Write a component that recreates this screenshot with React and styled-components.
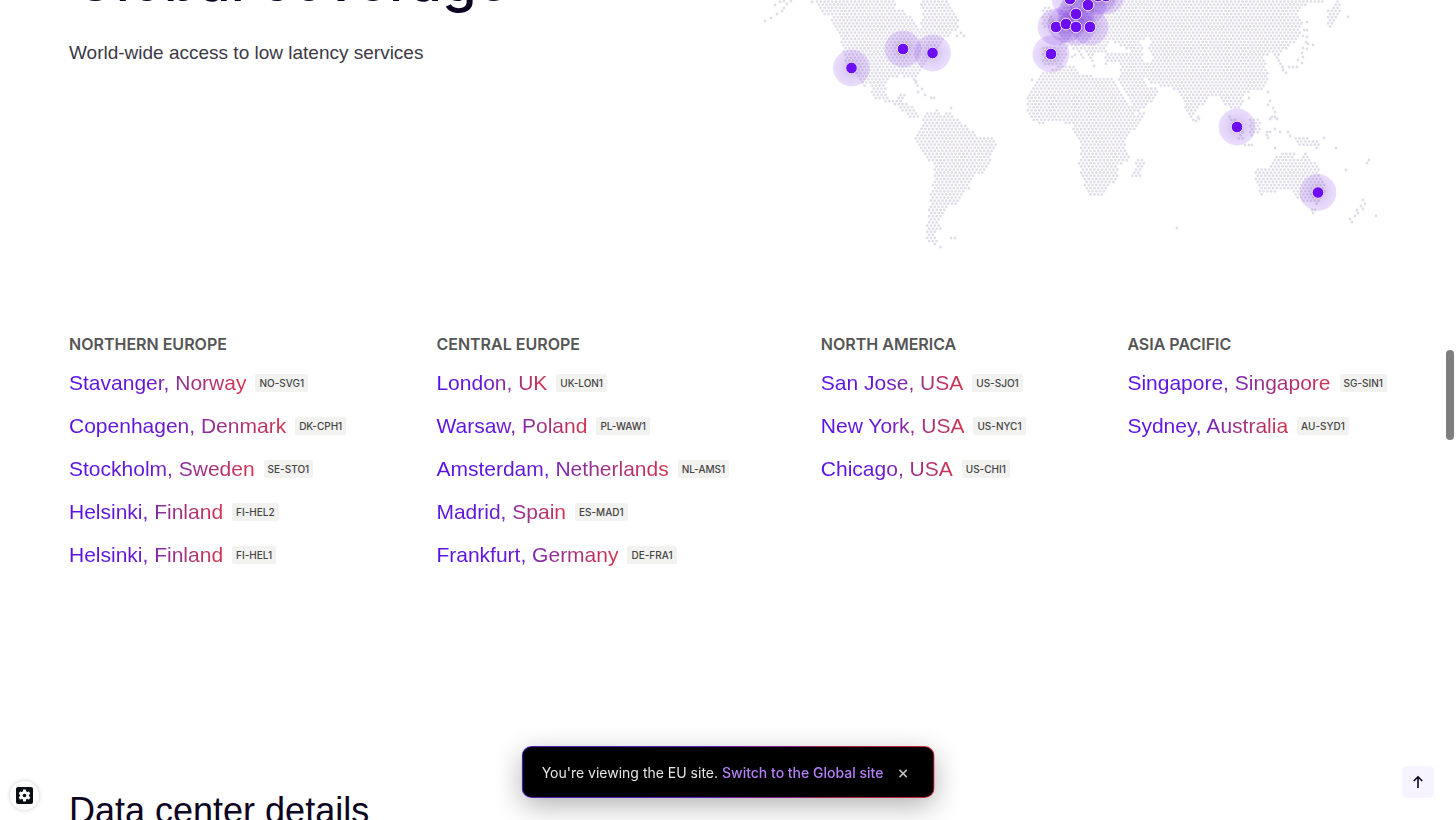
import React from 'react';
import styled, { createGlobalStyle } from 'styled-components';

const sans = `'Liberation Sans', Arial, sans-serif`;
const inter = `Inter, 'Liberation Sans', sans-serif`;

const GlobalStyle = createGlobalStyle`
  * {
    box-sizing: border-box;
  }

  body {
    margin: 0;
    background: #fff;
    color: #0c0420;
    font-family: ${inter};
  }
`;

const regions = [
  {
    name: 'Northern Europe',
    places: [
      ['Stavanger, Norway', 'NO-SVG1'],
      ['Copenhagen, Denmark', 'DK-CPH1'],
      ['Stockholm, Sweden', 'SE-STO1'],
      ['Helsinki, Finland', 'FI-HEL2'],
      ['Helsinki, Finland', 'FI-HEL1'],
    ],
  },
  {
    name: 'Central Europe',
    places: [
      ['London, UK', 'UK-LON1'],
      ['Warsaw, Poland', 'PL-WAW1'],
      ['Amsterdam, Netherlands', 'NL-AMS1'],
      ['Madrid, Spain', 'ES-MAD1'],
      ['Frankfurt, Germany', 'DE-FRA1'],
    ],
  },
  {
    name: 'North America',
    places: [
      ['San Jose, USA', 'US-SJO1'],
      ['New York, USA', 'US-NYC1'],
      ['Chicago, USA', 'US-CHI1'],
    ],
  },
  {
    name: 'Asia Pacific',
    places: [
      ['Singapore, Singapore', 'SG-SIN1'],
      ['Sydney, Australia', 'AU-SYD1'],
    ],
  },
];

// outlines of the land masses, filled with dots below
const land = [
  // north and central america
  [[812, -4], [823, 14], [830, 15], [835, 28], [840, 38], [842, 48], [843, 56], [848, 66], [857, 76], [864, 90], [868, 84], [875, 98], [887, 103], [897, 106], [907, 115], [914, 119], [922, 119], [912, 107], [903, 102], [906, 94], [898, 94], [894, 101], [888, 96], [885, 87], [888, 79], [900, 76], [911, 77], [917, 88], [919, 86], [915, 77], [921, 72], [926, 64], [933, 56], [942, 43], [949, 36], [960, 28], [959, 19], [952, 9], [944, -4], [919, -4], [923, 10], [920, 28], [916, 27], [913, 17], [903, 11], [896, 10], [895, -4]],
  // south america
  [[921, 118], [930, 111], [938, 110], [944, 115], [950, 111], [960, 121], [967, 126], [973, 132], [980, 137], [992, 137], [997, 144], [991, 157], [989, 164], [982, 174], [975, 174], [972, 183], [968, 190], [962, 196], [958, 204], [949, 206], [943, 216], [938, 223], [941, 228], [936, 235], [937, 242], [941, 248], [931, 244], [926, 240], [925, 232], [928, 220], [929, 207], [932, 187], [934, 170], [932, 163], [925, 158], [920, 150], [915, 142], [917, 133], [922, 126]],
  // africa
  [[1042, 71], [1037, 78], [1030, 89], [1027, 100], [1027, 112], [1035, 122], [1043, 124], [1052, 121], [1073, 124], [1073, 134], [1080, 143], [1081, 154], [1076, 163], [1082, 175], [1085, 187], [1091, 196], [1102, 196], [1107, 189], [1113, 183], [1119, 174], [1118, 167], [1129, 161], [1129, 154], [1126, 147], [1127, 137], [1137, 128], [1148, 112], [1133, 114], [1128, 104], [1120, 90], [1113, 76], [1098, 78], [1087, 75], [1077, 72], [1075, 64], [1062, 64], [1052, 70]],
  [[1143, 155], [1145, 163], [1140, 177], [1132, 176], [1136, 160]],
  // iberia, britain
  [[1042, 48], [1068, 46], [1066, 57], [1062, 64], [1050, 67], [1042, 63]],
  [[1041, 8], [1050, 6], [1056, 29], [1043, 28]],
  // eurasia
  [[1062, -4], [1058, 30], [1060, 48], [1071, 48], [1077, 51], [1083, 63], [1085, 57], [1081, 50], [1086, 51], [1092, 63], [1095, 54], [1104, 53], [1104, 64], [1119, 63], [1121, 74], [1117, 79], [1126, 96], [1135, 112], [1144, 108], [1157, 98], [1159, 89], [1148, 87], [1143, 78], [1149, 79], [1153, 85], [1170, 87], [1180, 93], [1185, 107], [1193, 121], [1198, 110], [1208, 98], [1219, 94], [1227, 107], [1235, 111], [1244, 104], [1242, 97], [1250, 92], [1263, 89], [1269, 80], [1268, 72], [1264, 58], [1272, 53], [1278, 61], [1280, 69], [1283, 67], [1278, 55], [1290, 47], [1300, 36], [1303, 23], [1298, 12], [1308, 3], [1326, 3], [1326, -4]],
  // kamchatka
  [[1338, -4], [1342, 12], [1332, 29], [1328, 26], [1328, 10], [1334, 5]],
  // borneo, new guinea, sumatra
  [[1248, 118], [1261, 118], [1260, 133], [1250, 137]],
  [[1295, 136], [1306, 138], [1318, 141], [1320, 149], [1305, 146], [1297, 145]],
  [[1226, 110], [1241, 125], [1244, 138], [1239, 140]],
  // australia
  [[1284, 152], [1295, 152], [1295, 158], [1302, 160], [1305, 150], [1309, 156], [1315, 163], [1320, 172], [1326, 183], [1325, 195], [1318, 204], [1307, 203], [1297, 198], [1291, 190], [1276, 191], [1259, 196], [1258, 186], [1254, 175], [1258, 168], [1267, 167], [1272, 159]],
];

// black sea, caspian sea
const seas = [
  [[1106, 49], [1111, 41], [1116, 43], [1129, 50], [1128, 54], [1107, 52]],
  [[1139, 43], [1147, 38], [1150, 42], [1146, 49], [1152, 56], [1150, 62], [1144, 62], [1143, 50]],
];

const islands = [
  [765, 21], [771, 18], [777, 14], [782, 11], [784, 8], [787, 4], [775, 5], [780, 2], [784, 1], [791, 1], [812, 2],
  [916, 81], [918, 92], [922, 89], [925, 95], [931, 98], [934, 98], [957, 36], [961, 33], [964, 36], [951, 108],
  [1094, 66], [1072, 57], [1075, 55], [1032, 80],
  [1304, 30], [1307, 22], [1307, 30], [1303, 36], [1307, 37], [1306, 42], [1308, 44], [1313, 45], [1303, 48],
  [1307, 49], [1302, 53], [1303, 57], [1298, 60], [1302, 63], [1297, 67], [1293, 67], [1289, 67], [1283, 70],
  [1286, 73], [1348, 17], [1268, 92], [1249, 98], [1270, 101], [1268, 105], [1273, 108], [1275, 112], [1272, 117],
  [1275, 117], [1270, 119], [1277, 119], [1198, 117], [1196, 121], [1199, 119], [1245, 145], [1249, 145],
  [1252, 145], [1267, 132], [1270, 132], [1267, 135], [1268, 138], [1275, 129], [1280, 132], [1288, 132], [1290, 136],
  [1324, 138], [1336, 148], [1346, 170], [1369, 160], [1367, 163], [1275, 148], [1376, 216], [1363, 200], [1365, 204],
  [1361, 206], [1363, 209], [1357, 210], [1358, 213], [1355, 216], [1350, 219], [1352, 222], [1312, 210], [1315, 210],
  [1313, 213], [1177, 228], [951, 238], [955, 238],
];

const markers = [
  [851.5, 68], [903, 49], [932.5, 53], [1051, 54], [1056, 27], [1066, 24], [1090, 27], [1076, 27],
  [1076, 14], [1070, -1], [1098, -4], [1106, -4], [1088, 5], [1237, 127], [1318, 192.5],
];

const inside = (x, y, shape) => {
  let hit = false;
  for (let i = 0, j = shape.length - 1; i < shape.length; j = i++) {
    const [xi, yi] = shape[i];
    const [xj, yj] = shape[j];
    if (yi > y !== yj > y && x < ((xj - xi) * (y - yi)) / (yj - yi) + xi) hit = !hit;
  }
  return hit;
};

const dotPath = (x, y) => `M${(x - 1.4).toFixed(2)} ${y.toFixed(2)}a1.4 1.4 0 1 0 2.8 0a1.4 1.4 0 1 0-2.8 0`;

const buildDots = () => {
  const stepX = 3.8;
  const stepY = 3.11;
  const dots = [];
  for (let row = 0; row < 82; row++) {
    const y = 247.3 - row * stepY;
    for (let x = 760 + (row % 2 ? 0 : stepX / 2); x < 1387; x += stepX) {
      if (land.some((s) => inside(x, y, s)) && !seas.some((s) => inside(x, y, s))) {
        dots.push(dotPath(x, y));
      }
    }
  }
  islands.forEach(([x, y]) => dots.push(dotPath(x, y)));
  return dots.join('');
};

const mapDots = buildDots();

const Page = styled.div`
  height: 100vh;
  overflow: hidden;
  padding: 0 69px;
`;

const Hero = styled.section`
  display: grid;
  grid-template-columns: minmax(0, 1fr) minmax(0, 627px);
  height: 252px;
`;

const Title = styled.h1`
  margin: -55px 0 0;
  padding-left: 5px;
  font-size: 56px;
  line-height: 72px;
  font-weight: 500;
  white-space: nowrap;
`;

const Lead = styled.p`
  margin: 23px 0 0;
  font-family: ${sans};
  font-size: 19px;
  line-height: 26px;
  color: #3c3947;
`;

const Map = styled.svg`
  display: block;
  width: 100%;
`;

const Regions = styled.section`
  display: grid;
  grid-template-columns: 368fr 385fr 307fr 258fr;
  padding-top: 80px;
`;

const RegionName = styled.h2`
  margin: 0 0 5px;
  font-size: 16px;
  line-height: 24px;
  font-weight: 600;
  text-transform: uppercase;
  color: #555;
`;

const Places = styled.ul`
  list-style: none;
  margin: 0;
  padding: 0;
`;

const Place = styled.li`
  display: flex;
  align-items: center;
  gap: 9px;
  height: 43px;
  white-space: nowrap;
`;

const PlaceLink = styled.a`
  font-family: ${sans};
  font-size: 21px;
  line-height: 28px;
  text-decoration: none;
  color: transparent;
  background: linear-gradient(90deg, #5a12ea 0%, #6418d8 42%, #96308e 66%, #d4344c 100%);
  background-clip: text;
  -webkit-background-clip: text;
`;

const Code = styled.span`
  padding: 0 4px;
  border-radius: 2px;
  background: #f2f2f0;
  color: #444;
  font-size: 10px;
  line-height: 18px;
  font-weight: 500;
`;

const Details = styled.h2`
  margin: 213px 0 0;
  font-family: ${sans};
  font-size: 36px;
  line-height: 44px;
  font-weight: 400;
`;

const Banner = styled.div`
  position: fixed;
  left: 50%;
  bottom: 22px;
  transform: translateX(-50%);
  display: flex;
  align-items: center;
  gap: 10px;
  height: 52px;
  padding: 2px 20px 0 19px;
  border: 1px solid transparent;
  border-radius: 10px;
  background: linear-gradient(#000, #000) padding-box,
    linear-gradient(90deg, #4a1fb8, #5b1fc0 45%, #b3203c 80%, #c8283c) border-box;
  box-shadow: 0 8px 28px rgba(0, 0, 0, 0.3);
  color: #e6e6e6;
  font-size: 14px;
  line-height: 20px;
  white-space: nowrap;
`;

const SwitchLink = styled.a`
  color: #b27ff5;
  font-weight: 500;
  text-decoration: none;
`;

const CloseButton = styled.button`
  display: flex;
  align-items: center;
  justify-content: center;
  width: 20px;
  height: 20px;
  padding: 0;
  border: 0;
  background: none;
  color: #bdbdbd;
`;

const CookieButton = styled.button`
  position: fixed;
  left: 10px;
  bottom: 10px;
  display: flex;
  align-items: center;
  justify-content: center;
  width: 29px;
  height: 29px;
  padding: 0;
  border: 0;
  border-radius: 50%;
  background: #fff;
  box-shadow: 0 0 4px rgba(20, 30, 60, 0.22);
`;

const TopButton = styled.button`
  position: fixed;
  right: 22px;
  bottom: 22px;
  display: flex;
  align-items: center;
  justify-content: center;
  width: 32px;
  height: 32px;
  padding: 0;
  border: 0;
  border-radius: 5px;
  background: #f7f4ff;
  color: #0c0420;
`;

const ScrollThumb = styled.div`
  position: fixed;
  top: 350px;
  right: 2px;
  width: 8px;
  height: 90px;
  border-radius: 4px;
  background: #7f7f7f;
`;

function CoverageMap() {
  return (
    <Map viewBox="760 0 627 252" role="img" aria-label="Data center locations">
      <defs>
        <radialGradient id="halo">
          <stop offset="0" stopColor="#5a18b8" stopOpacity="0.3" />
          <stop offset="0.6" stopColor="#6a1cd8" stopOpacity="0.19" />
          <stop offset="1" stopColor="#7420ea" stopOpacity="0.15" />
        </radialGradient>
      </defs>
      <path d={mapDots} fill="#e0dde9" />
      {markers.map(([x, y]) => (
        <circle key={`h${x}-${y}`} cx={x} cy={y} r="18.4" fill="url(#halo)" />
      ))}
      {markers.map(([x, y]) => (
        <circle key={`m${x}-${y}`} cx={x} cy={y} r="5.8" fill="#6d0df2" stroke="#e9dcfb" strokeWidth="1" />
      ))}
    </Map>
  );
}

function Region({ region }) {
  return (
    <div>
      <RegionName>{region.name}</RegionName>
      <Places>
        {region.places.map(([place, code]) => (
          <Place key={code}>
            <PlaceLink href={`#${code}`}>{place}</PlaceLink>
            <Code>{code}</Code>
          </Place>
        ))}
      </Places>
    </div>
  );
}

export default function App() {
  return (
    <>
      <GlobalStyle />
      <Page>
        <Hero>
          <div>
            <Title>Global coverage</Title>
            <Lead>World-wide access to low latency services</Lead>
          </div>
          <CoverageMap />
        </Hero>
        <Regions>
          {regions.map((region) => (
            <Region key={region.name} region={region} />
          ))}
        </Regions>
        <Details>Data center details</Details>
      </Page>

      <Banner>
        <span>
          You're viewing the EU site. <SwitchLink href="#global">Switch to the Global site</SwitchLink>
        </span>
        <CloseButton aria-label="Close">
          <svg width="9" height="9" viewBox="0 0 10 10" fill="none" stroke="currentColor" strokeWidth="1.8">
            <path d="M1 1l8 8M9 1L1 9" />
          </svg>
        </CloseButton>
      </Banner>

      <CookieButton aria-label="Cookie settings">
        <svg width="17" height="17" viewBox="0 0 17 17">
          <rect width="17" height="17" rx="2" fill="#0b0f14" />
          <g fill="#fff">
            <circle cx="8.5" cy="8.5" r="4.4" />
            {[0, 60, 120].map((a) => (
              <rect key={a} x="7" y="2.6" width="3" height="11.8" rx="0.6" transform={`rotate(${a} 8.5 8.5)`} />
            ))}
          </g>
          <circle cx="8.5" cy="8.5" r="1.8" fill="#0b0f14" />
        </svg>
      </CookieButton>

      <TopButton aria-label="Back to top">
        <svg width="12" height="14" viewBox="0 0 12 14" fill="none" stroke="currentColor" strokeWidth="1.6">
          <path d="M6 13V2M1.8 6L6 1.8 10.2 6" />
        </svg>
      </TopButton>
      <ScrollThumb />
    </>
  );
}
